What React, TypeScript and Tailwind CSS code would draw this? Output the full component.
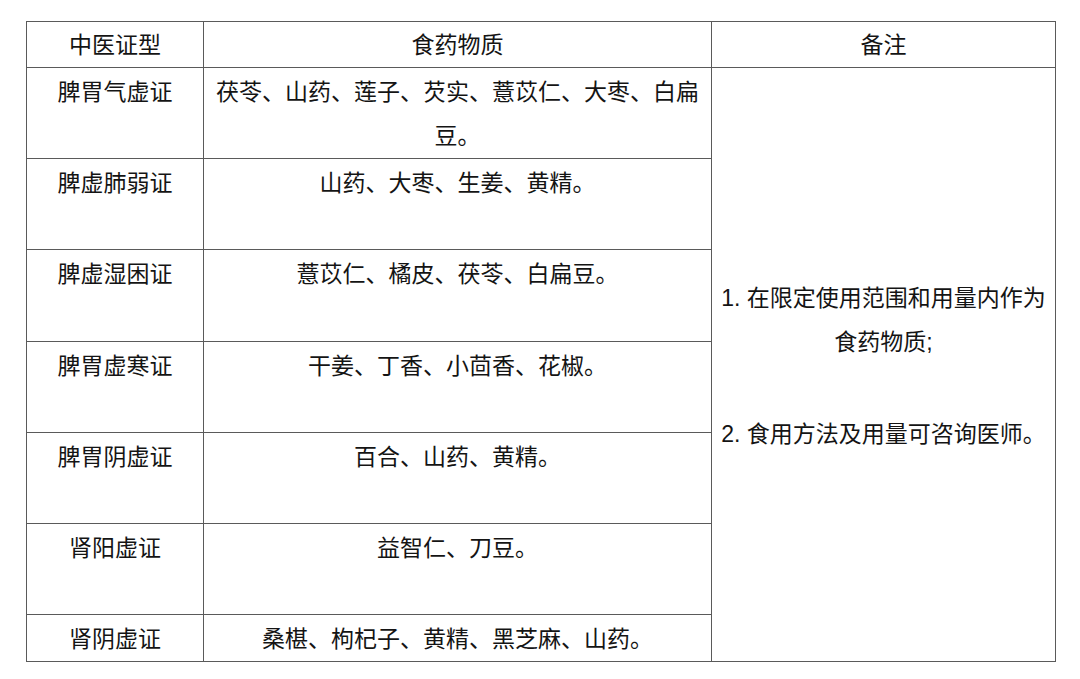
const rows: { name: string; items: React.ReactNode; h: string }[] = [
  {
    name: "脾胃气虚证",
    items: (
      <>
        茯苓、山药、莲子、芡实、薏苡仁、大枣、白扁
        <br />
        豆。
      </>
    ),
    h: "h-[90px]",
  },
  { name: "脾虚肺弱证", items: "山药、大枣、生姜、黄精。", h: "h-[91px]" },
  { name: "脾虚湿困证", items: "薏苡仁、橘皮、茯苓、白扁豆。", h: "h-[92px]" },
  { name: "脾胃虚寒证", items: "干姜、丁香、小茴香、花椒。", h: "h-[91px]" },
  { name: "脾胃阴虚证", items: "百合、山药、黄精。", h: "h-[91px]" },
  { name: "肾阳虚证", items: "益智仁、刀豆。", h: "h-[91px]" },
  { name: "肾阴虚证", items: "桑椹、枸杞子、黄精、黑芝麻、山药。", h: "h-[45px]" },
];

export default function App() {
  const cell = "border border-[#5a5a5a] text-center p-0";
  return (
    <div
      className="w-[1080px] h-[679px] bg-white text-[#141414] text-[23px] leading-[44px] pl-[26px] pt-[21px]"
      style={{ fontFamily: '"Liberation Sans", "Noto Sans CJK SC", sans-serif' }}
    >
      <table className="border-collapse table-fixed w-[1029px]">
        <colgroup>
          <col className="w-[177px]" />
          <col className="w-[508px]" />
          <col className="w-[344px]" />
        </colgroup>
        <thead>
          <tr className="h-[46px]">
            <th className={`${cell} font-normal align-middle`}>中医证型</th>
            <th className={`${cell} font-normal align-middle`}>食药物质</th>
            <th className={`${cell} font-normal align-middle`}>备注</th>
          </tr>
        </thead>
        <tbody>
          {rows.map((r, i) => (
            <tr key={r.name} className={r.h}>
              <td className={`${cell} align-top pt-[2px]`}>{r.name}</td>
              <td className={`${cell} align-top pt-[2px]`}>{r.items}</td>
              {i === 0 && (
                <td rowSpan={rows.length} className={`${cell} align-middle pt-[2px]`}>
                  <p>
                    1. 在限定使用范围和用量内作为
                    <br />
                    食药物质;
                  </p>
                  <div className="h-[48px]" />
                  <p>2. 食用方法及用量可咨询医师。</p>
                </td>
              )}
            </tr>
          ))}
        </tbody>
      </table>
    </div>
  );
}
